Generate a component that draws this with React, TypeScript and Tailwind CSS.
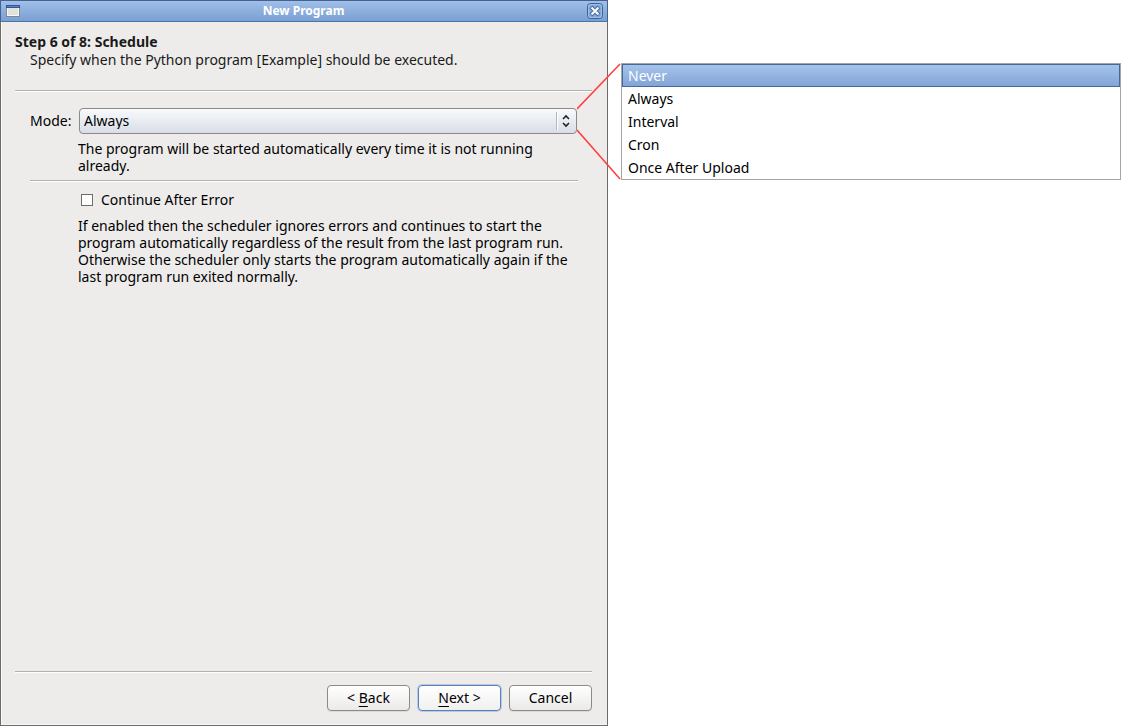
import { useState } from 'react';
import type { ReactNode } from 'react';

const modes = ['Never', 'Always', 'Interval', 'Cron', 'Once After Upload'];

function Divider() {
  return <hr className="h-[2px] border-0 border-t border-[#b3b1af] bg-white" />;
}

function WindowIcon() {
  return (
    <svg viewBox="0 0 14 12" className="w-[14px] h-3" aria-hidden="true">
      <rect x="0.5" y="0.5" width="13" height="11" fill="#dfe2dd" stroke="#85888a" />
      <rect x="1.5" y="2.5" width="11" height="8" fill="none" stroke="#f8f8f6" />
      <rect x="0" y="0" width="14" height="3" fill="#2f5593" />
      <rect x="1" y="1" width="12" height="1" fill="#5c86c4" />
    </svg>
  );
}

function CloseIcon() {
  return (
    <svg viewBox="0 0 16 16" className="w-4 h-4" aria-hidden="true">
      <rect x="0.5" y="0.5" width="15" height="15" rx="3" fill="#85a9da" stroke="#3a6295" />
      <rect x="1.5" y="1.5" width="13" height="13" rx="2" fill="none" stroke="#a0bde6" />
      <path d="M4 4 L12 12 M12 4 L4 12" stroke="#3a6295" strokeWidth="4" />
      <path d="M4.5 4.5 L11.5 11.5 M11.5 4.5 L4.5 11.5" stroke="#f4f7fb" strokeWidth="2.4" />
    </svg>
  );
}

function DialogButton({ children, focused = false }: { children: ReactNode; focused?: boolean }) {
  return (
    <button
      type="button"
      className={
        focused
          ? 'w-[83px] h-[26px] rounded-[4px] border border-[#6080b4] bg-gradient-to-b from-white to-[#f0f0ef] shadow-[0_0_0_1px_#b5cbea] leading-4'
          : 'w-[83px] h-[26px] rounded-[4px] border border-[#8c8a88] bg-gradient-to-b from-white to-[#ebeae9] shadow-[0_1px_0_#dddbd9] leading-4'
      }
    >
      {children}
    </button>
  );
}

export default function App() {
  const [mode, setMode] = useState('Always');

  return (
    <div className="grid grid-cols-[608fr_500fr] gap-x-[13px] min-h-screen bg-white font-['Noto_Sans','Open_Sans',sans-serif] text-[14px] leading-[17px] text-black">
      <main className="flex flex-col border border-t-0 border-[#6f6b68] bg-[#edeceb] shadow-[inset_1px_-1px_0_#f8f8f7]">
        <header className="-mx-px flex h-[22px] items-center justify-between border border-t-[#45618c] border-x-[#45618c] border-b-[#4a73ab] bg-gradient-to-b from-[#a0bfe9] to-[#7a9fd3] pl-[5px] pr-1">
          <WindowIcon />
          <h1 className="text-[12px] font-bold leading-4 text-white">New Program</h1>
          <button type="button" aria-label="Close">
            <CloseIcon />
          </button>
        </header>

        <form className="flex grow flex-col pl-[14px] pr-[15px] pb-[14px]">
          <div className="pt-[11px] pb-[21px] text-[#1a1a1a]">
            <h2 className="font-bold leading-[18px]">Step 6 of 8: Schedule</h2>
            <p className="pl-[15px] leading-[18px]">
              Specify when the Python program [Example] should be executed.
            </p>
          </div>
          <Divider />

          <div className="pl-[15px] pr-[14px] pt-4">
            <div className="flex items-center pr-px">
              <label htmlFor="mode" className="w-[49px] shrink-0 pb-0.5">Mode:</label>
              <div className="relative grow">
                <select
                  id="mode"
                  value={mode}
                  onChange={(e) => setMode(e.target.value)}
                  className="block h-[26px] w-full appearance-none rounded-[4px] border border-[#8c8a88] bg-gradient-to-b from-[#f8fafc] to-[#d9dee6] pl-1 pr-6 pb-0.5 leading-[17px]"
                >
                  {modes.map((name) => (
                    <option key={name}>{name}</option>
                  ))}
                </select>
                <svg viewBox="0 0 20 24" className="pointer-events-none absolute right-px top-px h-6 w-5" fill="none" aria-hidden="true">
                  <path d="M0.5 3 V21" stroke="#b2b6bd" />
                  <path d="M1.5 3 V21" stroke="#ffffff" />
                  <path d="M7 10 L10 7 L13 10 M7 14 L10 17 L13 14" stroke="#222222" strokeWidth="1.6" />
                </svg>
              </div>
            </div>
            <p className="pl-12 pt-1.5 pb-1.5">
              The program will be started automatically every time it is not running
              <br />
              already.
            </p>
            <Divider />

            <div className="flex items-center gap-2 pl-[51px] pt-[9px]">
              <input
                id="continue"
                type="checkbox"
                className="h-3 w-3 appearance-none border border-[#6f6d6b] bg-white checked:bg-[#7a9fd3]"
              />
              <label htmlFor="continue">Continue After Error</label>
            </div>
            <p className="pl-12 pt-[9px]">
              If enabled then the scheduler ignores errors and continues to start the
              <br />
              program automatically regardless of the result from the last program run.
              <br />
              Otherwise the scheduler only starts the program automatically again if the
              <br />
              last program run exited normally.
            </p>
          </div>

          <div className="mt-auto">
            <Divider />
            <div className="flex justify-end gap-2 pt-3">
              <DialogButton>
                &lt; <span className="underline underline-offset-3">B</span>ack
              </DialogButton>
              <DialogButton focused>
                <span className="underline underline-offset-3">N</span>ext &gt;
              </DialogButton>
              <DialogButton>Cancel</DialogButton>
            </div>
          </div>
        </form>
      </main>

      <aside className="relative mt-[63px] self-start">
        <svg viewBox="0 0 44 117" className="pointer-events-none absolute right-full top-0 h-[117px] w-11" fill="none" aria-hidden="true">
          <path d="M0 46 L43 1 M0 67 L43 116" stroke="#ff4040" strokeWidth="1.6" />
        </svg>
        <select
          size={5}
          aria-label="Available modes"
          defaultValue="Never"
          className="block w-full overflow-hidden border border-[#a5a5a5] bg-white"
        >
          {modes.map((name) => (
            <option
              key={name}
              className="h-[23px] border border-transparent px-[5px] pt-px pb-[3px] leading-[17px] text-black checked:border-[#466a98] checked:bg-gradient-to-b checked:from-[#a6c3ea] checked:to-[#82a5d8] checked:text-white"
            >
              {name}
            </option>
          ))}
        </select>
      </aside>
    </div>
  );
}
